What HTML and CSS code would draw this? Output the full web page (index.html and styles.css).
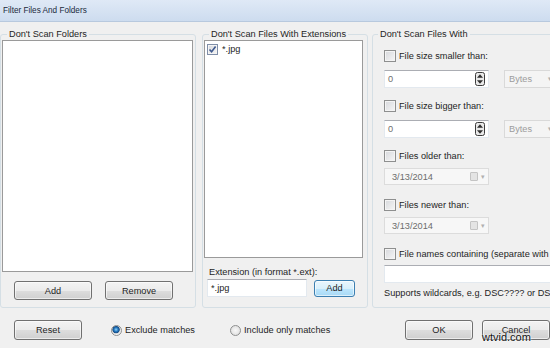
FILE: index.html
```html
<!DOCTYPE html>
<html lang="en">
<head>
  <meta charset="UTF-8" />
  <title>Filter Files And Folders</title>
  <link rel="stylesheet" href="styles.css">
</head>
<body>

  <div class="titlebar">Filter Files And Folders</div>

  <div class="groups">
    <fieldset class="group group-folders">
      <legend>Don't Scan Folders</legend>
      <div class="listbox folder-list"></div>
      <div class="btn-row">
        <button class="btn btn-add">Add</button>
        <button class="btn btn-remove">Remove</button>
      </div>
    </fieldset>

    <fieldset class="group group-ext">
      <legend>Don't Scan Files With Extensions</legend>
      <div class="listbox ext-list">
        <div class="ext-item"><span class="check checked">
          <svg width="9" height="9" viewBox="0 0 9 9"><path d="M1.5 4.5 L3.6 6.8 L7.6 1.6" fill="none" stroke="#3f5a8f" stroke-width="1.6"/></svg>
        </span>*.jpg</div>
      </div>
      <div class="ext-label">Extension (in format *.ext):</div>
      <div class="ext-entry">
        <div class="textbox ext-input">*.jpg</div>
        <button class="btn btn-default">Add</button>
      </div>
    </fieldset>

    <fieldset class="group group-filters">
      <legend>Don't Scan Files With</legend>

      <div class="opt"><span class="check"></span>File size smaller than:</div>
      <div class="field-row">
        <div class="textbox num">0
          <svg class="spin" width="10" height="14" viewBox="0 0 10 14">
            <rect x="0.5" y="0.5" width="9" height="13" rx="2" fill="#e9e9e9" stroke="#3c3c3c"/>
            <path d="M5 2.2 L8 5.8 H2 Z" fill="#2e2e2e"/>
            <path d="M5 11.8 L8 8.2 H2 Z" fill="#2e2e2e"/>
          </svg>
        </div>
        <div class="combo">Bytes<span class="arrow">&#9662;</span></div>
      </div>

      <div class="opt"><span class="check"></span>File size bigger than:</div>
      <div class="field-row">
        <div class="textbox num">0
          <svg class="spin" width="10" height="14" viewBox="0 0 10 14">
            <rect x="0.5" y="0.5" width="9" height="13" rx="2" fill="#e9e9e9" stroke="#3c3c3c"/>
            <path d="M5 2.2 L8 5.8 H2 Z" fill="#2e2e2e"/>
            <path d="M5 11.8 L8 8.2 H2 Z" fill="#2e2e2e"/>
          </svg>
        </div>
        <div class="combo">Bytes<span class="arrow">&#9662;</span></div>
      </div>

      <div class="opt"><span class="check"></span>Files older than:</div>
      <div class="date-row">
        <div class="datebox">3/13/2014<span class="cal"></span><span class="arrow">&#9662;</span></div>
      </div>

      <div class="opt"><span class="check"></span>Files newer than:</div>
      <div class="date-row">
        <div class="datebox">3/13/2014<span class="cal"></span><span class="arrow">&#9662;</span></div>
      </div>

      <div class="opt"><span class="check"></span>File names containing (separate with commas):</div>
      <div class="textbox names"></div>
      <div class="hint">Supports wildcards, e.g. DSC???? or DSC*.jpg</div>
    </fieldset>
  </div>

  <div class="footer">
    <button class="btn btn-reset">Reset</button>
    <label class="radio-opt first"><span class="radio on"></span>Exclude matches</label>
    <label class="radio-opt second"><span class="radio"></span>Include only matches</label>
    <button class="btn btn-ok">OK</button>
    <button class="btn btn-cancel">Cancel</button>
  </div>

  <span class="watermark">wtvid.com</span>

</body>
</html>
```

FILE: styles.css
```css
* {
  box-sizing: border-box;
}

body {
  margin: 0;
  width: 550px;
  height: 348px;
  overflow: hidden;
  position: relative;
  background: #f0f0f0;
  font-family: "Liberation Sans", Arial, sans-serif;
  font-size: 9.2px;
  color: #1e1e1e;
}

.titlebar {
  height: 22px;
  line-height: 21px;
  padding-left: 3px;
  font-size: 8.2px;
  color: #1b2a3c;
  background: linear-gradient(#dfe9f6, #cddcef);
  border-bottom: 1px solid #b8c9de;
}

.groups {
  display: flex;
  margin-top: 6px;
  height: 280px;
}

.group {
  margin: 0;
  padding: 0;
  height: 280px;
  flex-shrink: 0;
  min-width: 0;
  border: 1px solid #d5dfe5;
  border-radius: 3px;
}

.group legend {
  margin-left: 6px;
  padding: 0 2px;
  line-height: 12px;
}

.group-folders {
  width: 196px;
}

.group-ext {
  width: 166px;
  margin-left: 6px;
}

.group-filters {
  width: 270px;
  margin-left: 4px;
  padding-left: 11px;
  padding-top: 9px;
}

.group-filters legend {
  margin-left: -6px;
}

.listbox {
  background: #fff;
  border: 1px solid #9a9a9a;
}

.folder-list {
  margin: 0 2px 0 1px;
  height: 232px;
}

.btn-row {
  display: flex;
  margin-top: 9px;
}

.btn {
  font: inherit;
  height: 19px;
  padding: 0;
  color: #1e1e1e;
  border: 1px solid #707070;
  border-radius: 3px;
  background: linear-gradient(#f3f3f3 0%, #ebebeb 50%, #dddddd 51%, #cfcfcf 100%);
  box-shadow: inset 0 0 0 1px rgba(255, 255, 255, 0.6);
}

.btn-add {
  margin-left: 13px;
  width: 78px;
}

.btn-remove {
  margin-left: 13px;
  width: 68px;
}

.btn-default {
  width: 41px;
  height: 17px;
  margin-left: 7px;
  border-color: #3c7fb1;
  background: linear-gradient(#eaf6fd 0%, #d9f0fc 50%, #bee6fd 51%, #a7d9f5 100%);
}

.ext-list {
  margin: 0 4px 0 1px;
  height: 218px;
  padding: 2px 0 0 2px;
}

.ext-item {
  display: flex;
  align-items: center;
  height: 12px;
}

.check {
  display: inline-flex;
  align-items: center;
  justify-content: center;
  width: 12px;
  height: 12px;
  margin-right: 3px;
  flex-shrink: 0;
  border: 1px solid #8e8f8f;
  background: linear-gradient(135deg, #d6d8dc 0%, #f6f6f6 100%);
  box-shadow: inset 0 0 0 1px #f4f4f4;
}

.check.checked {
  width: 11px;
  height: 11px;
  margin-right: 4px;
  border-color: #7f8ea8;
}

.ext-label {
  margin-top: 8px;
  padding-left: 6px;
  line-height: 12px;
}

.ext-entry {
  display: flex;
  align-items: center;
  margin-top: 1px;
  padding-left: 4px;
}

.textbox {
  height: 18px;
  background: #fff;
  border: 1px solid #e3e9ef;
  border-top-color: #abadb3;
  display: flex;
  align-items: center;
}

.ext-input {
  width: 100px;
  padding-left: 3px;
}

.opt {
  display: flex;
  align-items: center;
  height: 14px;
  white-space: nowrap;
}

.field-row {
  display: flex;
  margin-top: 7px;
  margin-bottom: 11px;
}

.num {
  width: 105px;
  padding: 0 3px;
  color: #6d6d6d;
  justify-content: space-between;
}

.combo {
  width: 52px;
  height: 18px;
  margin-left: 15px;
  padding-left: 4px;
  display: flex;
  align-items: center;
  justify-content: space-between;
  color: #9c9c9c;
  background: #f4f4f4;
  border: 1px solid #d9d9d9;
}

.arrow {
  font-size: 7px;
  color: #b0b0b0;
  padding-right: 3px;
}

.date-row {
  margin-top: 5px;
  margin-bottom: 13px;
}

.datebox {
  width: 105px;
  height: 17px;
  padding-left: 7px;
  display: flex;
  align-items: center;
  color: #6d6d6d;
  background: #f7f7f7;
  border: 1px solid #dcdcdc;
}

.cal {
  width: 8px;
  height: 9px;
  margin-left: auto;
  margin-right: 3px;
  border: 1px solid #c4c4c4;
  border-radius: 1px;
  background: #e4e4e4;
}

.names {
  width: 260px;
  margin-top: 4px;
}

.hint {
  margin-top: 4px;
  line-height: 12px;
  white-space: nowrap;
}

.footer {
  display: flex;
  align-items: center;
  height: 20px;
  margin-top: 12px;
}

.btn-reset {
  margin-left: 14px;
  width: 68px;
  height: 20px;
}

.radio-opt {
  display: flex;
  align-items: center;
}

.radio-opt.first {
  margin-left: 29px;
}

.radio-opt.second {
  margin-left: 35px;
}

.radio {
  width: 11px;
  height: 11px;
  margin-right: 3px;
  border-radius: 50%;
  border: 1px solid #8e8f8f;
  background: radial-gradient(circle, #f8f8f8 0%, #d9d9d9 100%);
}

.radio.on {
  background: radial-gradient(circle at 45% 40%, #8fd4fb 0px, #2477be 2px, #164d86 3.3px, #dcdcdc 4px, #f4f4f4 5px);
}

.btn-ok {
  margin-left: auto;
  width: 68px;
  height: 20px;
}

.btn-cancel {
  margin-left: 9px;
  width: 68px;
  height: 20px;
}

.watermark {
  position: absolute;
  left: 482px;
  top: 331px;
  font-size: 11px;
  color: #111;
  text-shadow: 0 0 2px #fff, 0 0 2px #fff;
}
```
